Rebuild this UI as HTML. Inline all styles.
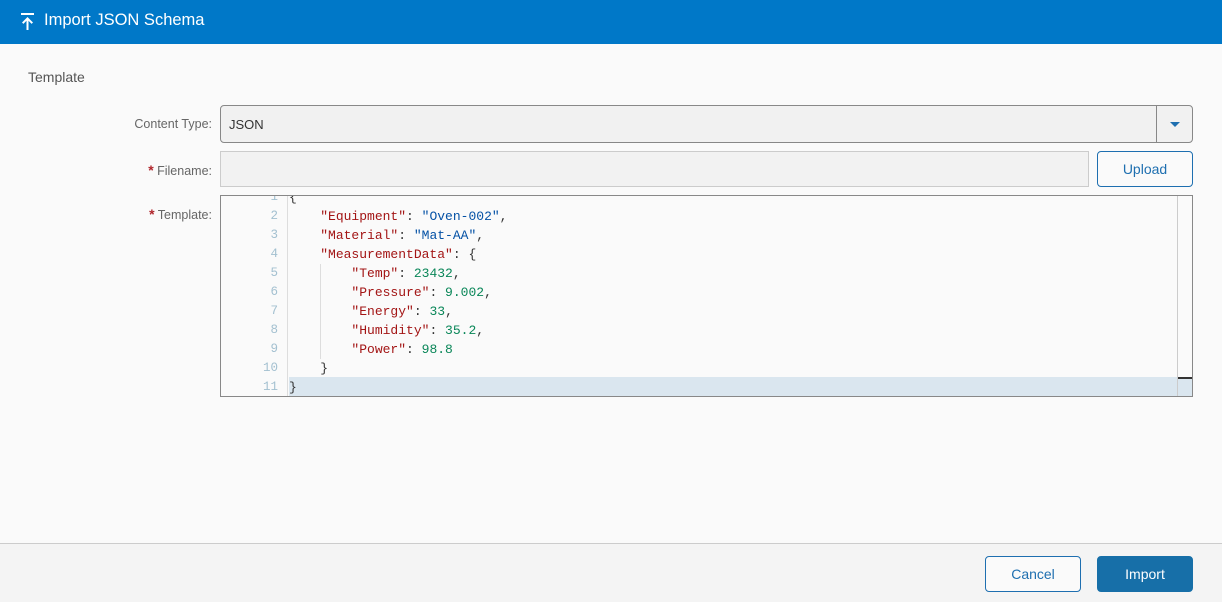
<!DOCTYPE html>
<html><head><style>
*{box-sizing:border-box;margin:0;padding:0}
body{width:1222px;height:602px;background:#fafafa;font-family:"Liberation Sans",sans-serif;position:relative;overflow:hidden}
.hdr{position:absolute;left:0;top:0;width:1222px;height:44px;background:#0078c8;color:#fff;font-size:16.5px}
.hdr span{position:absolute;left:44px;top:11px}
.sec{position:absolute;left:28px;top:69px;font-size:14px;color:#555}
.lbl{position:absolute;font-size:12.5px;color:#666;text-align:right;width:200px;left:12px}
.lbl b{color:#b0262c;font-weight:bold;font-size:14px}
.sel{position:absolute;left:220px;top:105px;width:973px;height:38px;border:1px solid #888;border-radius:4px;background:#f1f1f1;font-size:13px;color:#333;padding:11px 8px}
.sel .d{position:absolute;right:0;top:0;width:36px;height:36px;border-left:1px solid #888}
.sel .d:after{content:"";position:absolute;left:13px;top:16px;border-left:5px solid transparent;border-right:5px solid transparent;border-top:5px solid #1e6fb0}
.fn{position:absolute;left:220px;top:151px;width:869px;height:36px;border:1px solid #ccc;background:#f2f2f2}
.btn{position:absolute;height:36px;border:1px solid #1e6fb0;border-radius:4px;font-size:14px;text-align:center;line-height:34px}
.ed{position:absolute;left:220px;top:195px;width:973px;height:202px;border:1px solid #888;background:#fafafa;overflow:hidden;font-family:"Liberation Mono",monospace;font-size:13px}
.gut{position:absolute;left:0;top:0;width:67px;height:200px;border-right:1px solid #ddd}
.ln{position:absolute;left:0;height:19px;line-height:19px;width:100%;white-space:pre}
.num{position:absolute;width:57px;text-align:right;color:#a3c0d0;font-size:12.5px}
.code{position:absolute;left:68px;color:#333}
.k{color:#a31515}.s{color:#0451a5}.n{color:#098658}
.ft{position:absolute;left:0;top:543px;width:1222px;height:59px;border-top:1px solid #ccc;background:#f4f4f4}
</style></head><body>
<div class="hdr"><svg style="position:absolute;left:20px;top:13px" width="15" height="17" viewBox="0 0 15 17"><rect x="1" y="0" width="13" height="2" fill="#fff"/><path d="M7.5 4 L2 9.5 L3.4 10.9 L6.5 7.8 V17 H8.5 V7.8 L11.6 10.9 L13 9.5 Z" fill="#fff"/></svg><span>Import JSON Schema</span></div>
<div class="sec">Template</div>
<div class="lbl" style="top:117px">Content Type:</div>
<div class="sel">JSON<div class="d"></div></div>
<div class="lbl" style="top:162px"><b>*</b> Filename:</div>
<div class="fn"></div>
<div class="btn" style="left:1097px;top:151px;width:96px;color:#1e6fb0;background:#fafafa">Upload</div>
<div class="lbl" style="top:206px"><b>*</b> Template:</div>
<div class="ed">
<div style="position:absolute;left:68px;top:181px;width:903px;height:19px;background:#dae6ef"></div>
<div style="position:absolute;right:14px;top:0;width:1px;height:200px;background:#ccc"></div>
<div style="position:absolute;right:0;top:181px;width:14px;height:2px;background:#333"></div>
<div style="position:absolute;left:99px;top:68px;width:1px;height:95px;background:#ddd"></div>
<div class="gut"></div>
<div class="ln" style="top:-8px"><span class="num">1</span><span class="code">{</span></div>
<div class="ln" style="top:11px"><span class="num">2</span><span class="code">    <span class="k">"Equipment"</span>: <span class="s">"Oven-002"</span>,</span></div>
<div class="ln" style="top:30px"><span class="num">3</span><span class="code">    <span class="k">"Material"</span>: <span class="s">"Mat-AA"</span>,</span></div>
<div class="ln" style="top:49px"><span class="num">4</span><span class="code">    <span class="k">"MeasurementData"</span>: {</span></div>
<div class="ln" style="top:68px"><span class="num">5</span><span class="code">        <span class="k">"Temp"</span>: <span class="n">23432</span>,</span></div>
<div class="ln" style="top:87px"><span class="num">6</span><span class="code">        <span class="k">"Pressure"</span>: <span class="n">9.002</span>,</span></div>
<div class="ln" style="top:106px"><span class="num">7</span><span class="code">        <span class="k">"Energy"</span>: <span class="n">33</span>,</span></div>
<div class="ln" style="top:125px"><span class="num">8</span><span class="code">        <span class="k">"Humidity"</span>: <span class="n">35.2</span>,</span></div>
<div class="ln" style="top:144px"><span class="num">9</span><span class="code">        <span class="k">"Power"</span>: <span class="n">98.8</span></span></div>
<div class="ln" style="top:163px"><span class="num">10</span><span class="code">    }</span></div>
<div class="ln" style="top:182px"><span class="num">11</span><span class="code">}</span></div>
</div>
<div class="ft">
<div class="btn" style="left:985px;top:12px;width:96px;color:#1e6fb0;background:#fafafa">Cancel</div>
<div class="btn" style="left:1097px;top:12px;width:96px;color:#fff;background:#176fa8;border-color:#176fa8">Import</div>
</div>
</body></html>
